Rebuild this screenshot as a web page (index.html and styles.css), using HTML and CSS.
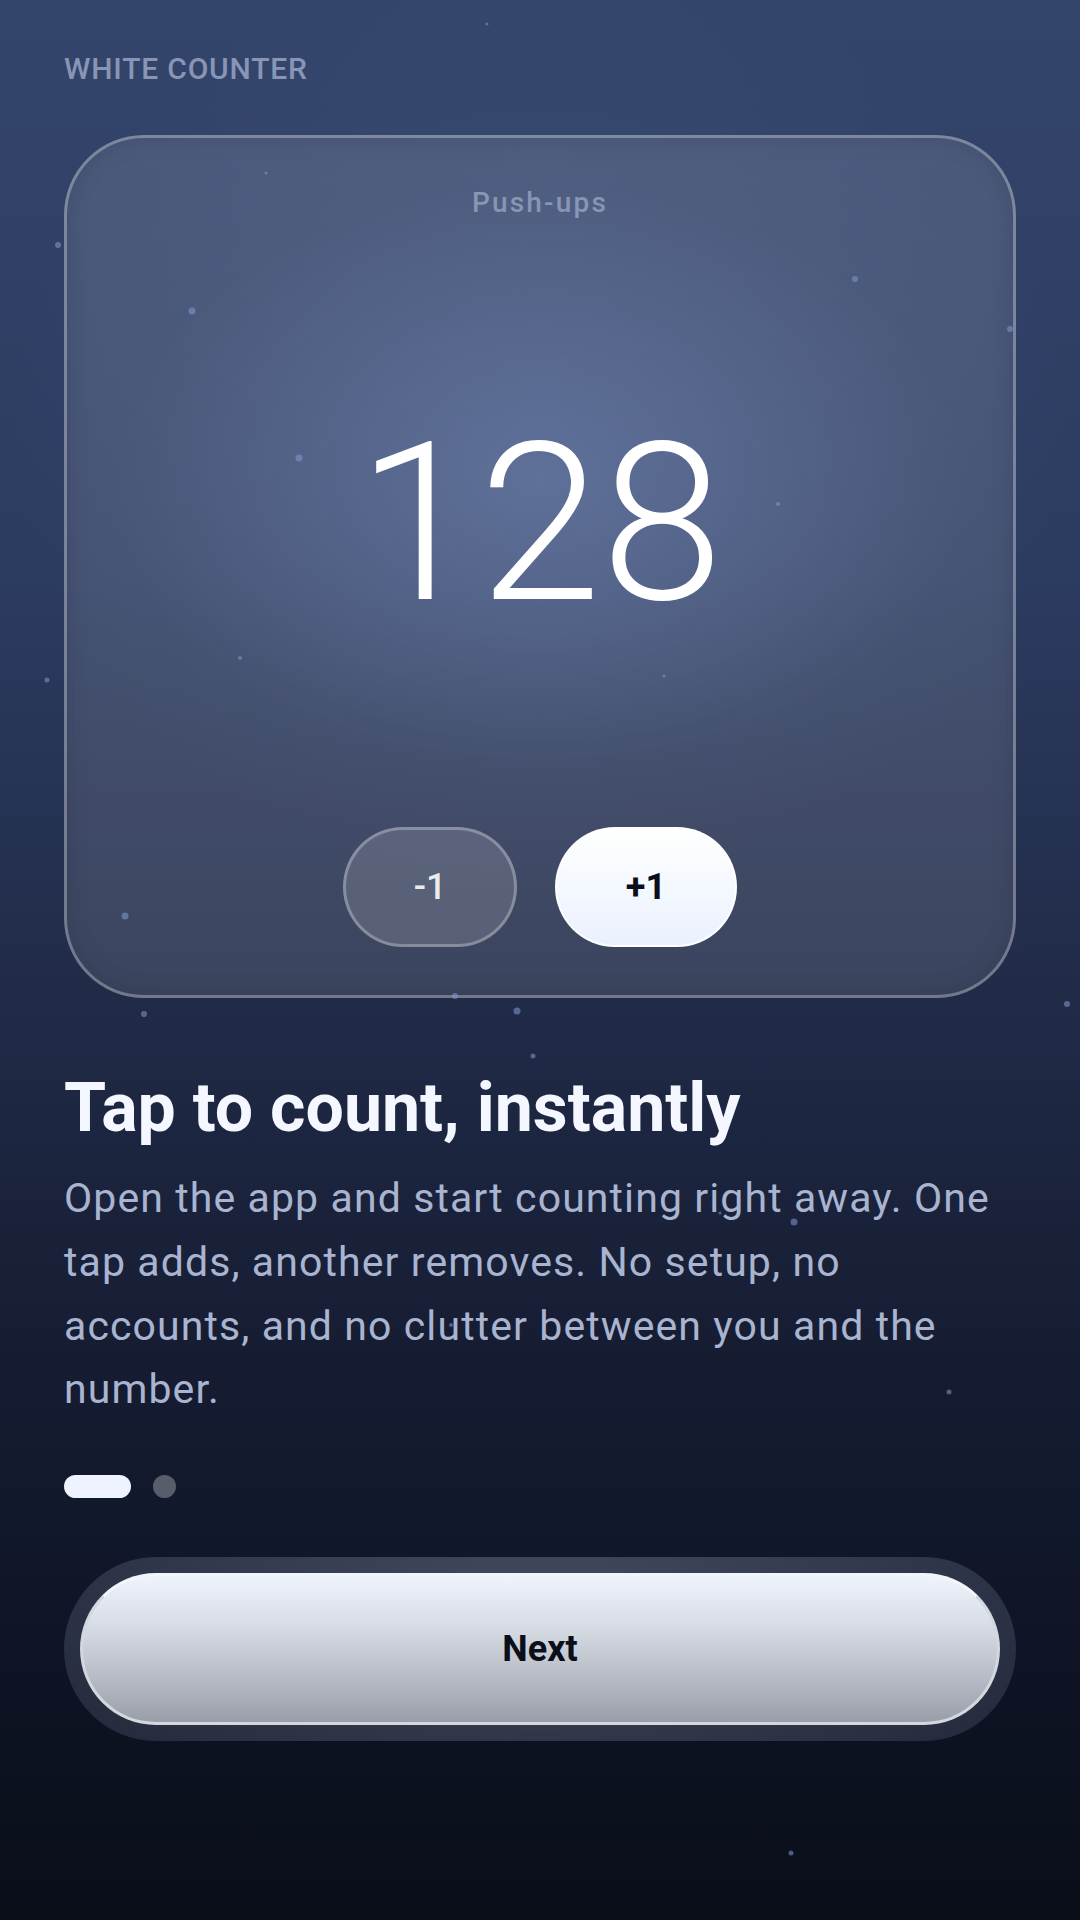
FILE: index.html
```html
<!DOCTYPE html>
<html lang="en">
  <head>
    <meta charset="UTF-8" />
    <title>White Counter</title>
    <link rel="stylesheet" href="styles.css">
  </head>
  <body>
    <main class="screen">
      <p class="brand">WHITE COUNTER</p>

      <section class="counter-card">
        <div class="counter-label">Push-ups</div>
        <div class="counter-value">128</div>
        <div class="counter-actions">
          <button class="btn-step btn-minus">-1</button>
          <button class="btn-step btn-plus">+1</button>
        </div>
      </section>

      <h1 class="title">Tap to count, instantly</h1>
      <p class="lead">Open the app and start counting right away. One tap adds, another removes. No setup, no accounts, and no clutter between you and the number.</p>

      <div class="pager">
        <span class="dot active"></span>
        <span class="dot"></span>
      </div>

      <div class="next-ring">
        <button class="btn-next">Next</button>
      </div>

      <!-- звёздочки поверх всего -->
      <svg class="stars" viewBox="0 0 1080 1920" width="1080" height="1920">
        <circle cx="487" cy="24" r="1.5" />
        <circle cx="266" cy="173" r="1.5" />
        <circle cx="58" cy="245" r="3" />
        <circle cx="192" cy="311" r="3.5" />
        <circle cx="855" cy="279" r="3" />
        <circle cx="1010" cy="329" r="3" />
        <circle cx="299" cy="458" r="3.5" />
        <circle cx="778" cy="504" r="2" />
        <circle cx="240" cy="658" r="2" />
        <circle cx="47" cy="680" r="2.5" />
        <circle cx="664" cy="676" r="1.5" />
        <circle cx="125" cy="916" r="3.5" />
        <circle cx="455" cy="996" r="3" />
        <circle cx="517" cy="1011" r="3.5" />
        <circle cx="144" cy="1014" r="3" />
        <circle cx="1067" cy="1004" r="3" />
        <circle cx="533" cy="1056" r="2.5" />
        <circle cx="794" cy="1222" r="3.5" />
        <circle cx="720" cy="1213" r="1.5" />
        <circle cx="949" cy="1392" r="2.5" />
        <circle cx="451" cy="1325" r="2" />
        <circle cx="791" cy="1853" r="2.5" />
      </svg>
    </main>
  </body>
</html>
```

FILE: styles.css
```css
:root {
  --text-main: #f4f7ff;
  --text-soft: #a9b4d0;
  --text-muted: #8895b5;
  --ink: #0b0f1a;
  --line: rgba(255, 255, 255, 0.28);
  --gap: 64px;
}

html,
body {
  margin: 0;
  padding: 0;
}

body {
  font-family: Roboto, "Noto Sans", sans-serif;
  background: #0b0f1a;
}

/* Экран целиком */
.screen {
  position: relative;
  width: 1080px;
  height: 1920px;
  box-sizing: border-box;
  padding: 51px var(--gap) 0;
  overflow: hidden;
  background:
    radial-gradient(ellipse 70% 35% at 50% 22%, rgba(90, 110, 160, 0.25), transparent 70%),
    linear-gradient(180deg, #34456b 0%, #2c3b60 30%, #212b48 52%, #161d33 70%, #0f1526 85%, #0a0e19 100%);
}

.brand {
  margin: 0;
  font-size: 30px;
  line-height: 36px;
  font-weight: 500;
  letter-spacing: 0.8px;
  color: var(--text-muted);
}

/* Карточка счётчика */
.counter-card {
  margin-top: 48px;
  height: 863px;
  box-sizing: border-box;
  padding: 48px 0;
  display: flex;
  flex-direction: column;
  align-items: center;
  border: 3px solid var(--line);
  border-radius: 80px;
  background:
    radial-gradient(ellipse 60% 45% at 50% 40%, rgba(130, 155, 210, 0.3), transparent 75%),
    rgba(255, 255, 255, 0.12);
  box-shadow: inset 0 0 24px rgba(10, 16, 35, 0.12);
}

.counter-label {
  font-size: 28px;
  line-height: 34px;
  font-weight: 500;
  letter-spacing: 2.2px;
  color: var(--text-muted);
}

.counter-value {
  flex: 1;
  display: flex;
  align-items: center;
  justify-content: center;
  font-size: 220px;
  line-height: 220px;
  font-weight: 300;
  color: #fff;
}

.counter-actions {
  display: flex;
  gap: 38px;
}

.btn-step {
  height: 120px;
  border-radius: 60px;
  font-family: inherit;
  font-size: 36px;
  cursor: pointer;
}

.btn-minus {
  width: 174px;
  border: 3px solid var(--line);
  background: rgba(255, 255, 255, 0.14);
  color: rgba(255, 255, 255, 0.9);
  font-weight: 500;
}

.btn-plus {
  width: 182px;
  border: 2px solid rgba(255, 255, 255, 0.85);
  background: linear-gradient(180deg, #ffffff, #eaf1fe);
  color: var(--ink);
  font-weight: 700;
}

/* Текст */
.title {
  margin: 70px 0 0;
  font-size: 68px;
  line-height: 80px;
  font-weight: 700;
  color: var(--text-main);
}

.lead {
  margin: 19px 0 0;
  font-size: 41px;
  line-height: 63.75px;
  letter-spacing: 1.1px;
  color: var(--text-soft);
}

/* Точки страниц */
.pager {
  margin-top: 52.5px;
  display: flex;
  gap: 22px;
}

.dot {
  width: 23px;
  height: 23px;
  border-radius: 12px;
  background: #585d6b;
}

.dot.active {
  width: 67px;
  background: #eef3ff;
}

/* Кнопка Next */
.next-ring {
  margin-top: 59px;
  padding: 16px;
  border-radius: 92px;
  background: radial-gradient(ellipse 60% 120% at 50% 30%, rgba(170, 180, 205, 0.34), rgba(150, 160, 190, 0.16));
}

.btn-next {
  display: block;
  width: 100%;
  height: 152px;
  border: 3px solid #d3d7de;
  border-top-color: #f2f5fc;
  border-radius: 76px;
  background: linear-gradient(180deg, #eef3fc 0%, #d6dbe4 35%, #b6bbc5 70%, #999ea8 100%);
  font-family: inherit;
  font-size: 36px;
  font-weight: 700;
  color: var(--ink);
  cursor: pointer;
}

.stars {
  position: absolute;
  left: 0;
  top: 0;
  pointer-events: none;
  fill: rgba(130, 155, 210, 0.55);
}
```
